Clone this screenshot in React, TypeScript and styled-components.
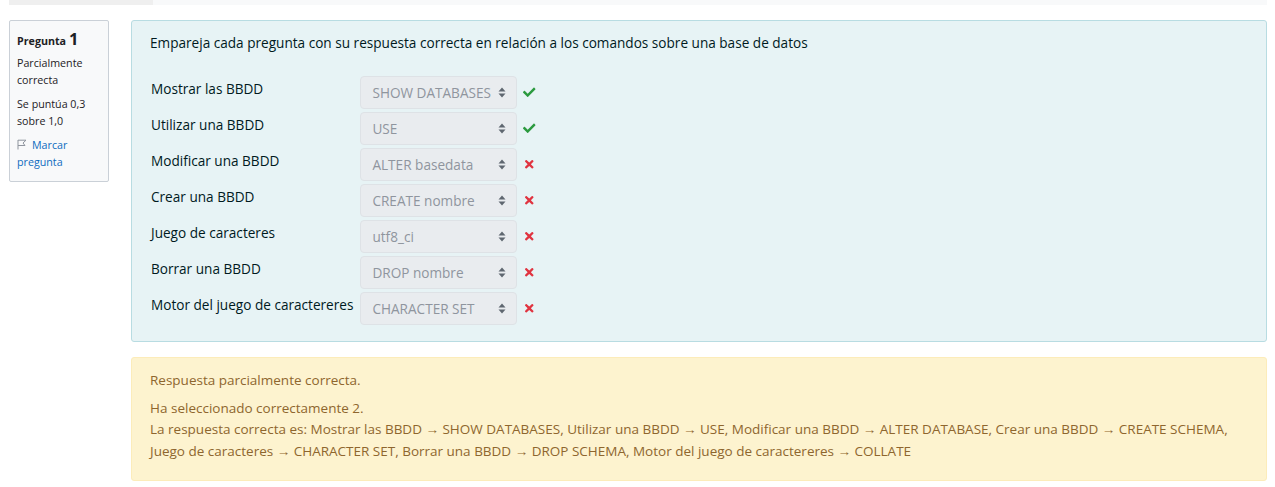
import React from "react";
import styled, { createGlobalStyle } from "styled-components";
import { FaCheck, FaTimes } from "react-icons/fa";

const Global = createGlobalStyle`
  html, body { margin: 0; padding: 0; background: #fff; }
  body { font-family: "Open Sans", "Noto Sans", sans-serif; color: #1d2125; }
`;

const Page = styled.div`
  width: 1275px;
  height: 487px;
  overflow: hidden;
  box-sizing: border-box;
`;

const TopStrip = styled.div`
  display: flex;
  height: 5px;
  margin: 0 8px 0 9px;
`;

const StripPart = styled.div<{ $w?: number; $bg: string }>`
  background: ${(p) => p.$bg};
  ${(p) => (p.$w ? `width: ${p.$w}px;` : "flex: 1;")}
`;

const Question = styled.div`
  display: flex;
  gap: 22px;
  margin: 15px 8px 0 9px;
`;

const Info = styled.div`
  width: 100px;
  flex: none;
  box-sizing: border-box;
  align-self: flex-start;
  background: #f8f9fa;
  border: 1px solid #cad0d7;
  border-radius: 2px;
  padding: 8px 7px 10px 7px;
  font-size: 10.7px;
  line-height: 17px;
  color: #1d2125;
`;

const QNo = styled.h3`
  margin: 0 0 4px 0;
  font-size: 10.7px;
  font-weight: 700;
  line-height: 20px;
  span { font-size: 16.5px; margin-left: 3px; }
`;

const InfoLine = styled.div`
  margin-bottom: 7px;
`;

const FlagLink = styled.div`
  color: #0f6cbf;
  svg { margin-right: 5px; vertical-align: -1px; }
`;

const Main = styled.div`
  flex: 1;
  display: flex;
  flex-direction: column;
  gap: 15px;
`;

const Formulation = styled.div`
  background: #e7f3f5;
  border: 1px solid #b8dce2;
  border-radius: 3px;
  padding: 11px 18px 16px 18px;
  color: #001a1e;
  font-size: 13.6px;
`;

const QText = styled.div`
  line-height: 22px;
  margin-bottom: 22px;
`;

const Matches = styled.div`
  display: grid;
  grid-template-columns: max-content max-content 20px;
  column-gap: 5px;
  row-gap: 3px;
  align-items: start;
`;

const Label = styled.div`
  line-height: 22px;
  padding-top: 2px;
  padding-left: 1px;
  padding-right: 2px;
  color: #001a1e;
`;

const Select = styled.div`
  width: 157px;
  height: 33px;
  box-sizing: border-box;
  background: #e9ecef;
  border: 1px solid #dee2e6;
  border-radius: 4px;
  display: flex;
  align-items: center;
  justify-content: space-between;
  padding: 0 10px 0 11px;
  color: #8f959e;
  white-space: nowrap;
`;

const Mark = styled.div<{ $ok: boolean }>`
  height: 33px;
  display: flex;
  align-items: center;
  padding-left: 1px;
  color: ${(p) => (p.$ok ? "#2b9a3f" : "#e03440")};
  font-size: 12.5px;
`;

const Feedback = styled.div`
  background: #fdf3cf;
  border: 1px solid #fcecba;
  border-radius: 3px;
  padding: 12px 18px 18px 18px;
  color: #8e662e;
  font-size: 13.5px;
  line-height: 21.5px;
  p { margin: 0; }
  p + p { margin-top: 6px; }
`;

const Arrows = () => (
  <svg width="8" height="11" viewBox="0 0 8 11">
    <path d="M4 0.5 L7.5 4.5 H0.5 Z" fill="#5f6770" />
    <path d="M4 10.5 L7.5 6.5 H0.5 Z" fill="#5f6770" />
  </svg>
);

const Flag = () => (
  <svg width="10" height="11" viewBox="0 0 10 11" fill="none" stroke="#8f959e" strokeWidth="1">
    <path d="M1 1 V10.5" />
    <path d="M1 1.2 L9 1.2 L6 4 L8 6.5 L1 6.5" />
  </svg>
);

const rows: { label: string; value: string; ok: boolean }[] = [
  { label: "Mostrar las BBDD", value: "SHOW DATABASES", ok: true },
  { label: "Utilizar una BBDD", value: "USE", ok: true },
  { label: "Modificar una BBDD", value: "ALTER basedata", ok: false },
  { label: "Crear una BBDD", value: "CREATE nombre", ok: false },
  { label: "Juego de caracteres", value: "utf8_ci", ok: false },
  { label: "Borrar una BBDD", value: "DROP nombre", ok: false },
  { label: "Motor del juego de caractereres", value: "CHARACTER SET", ok: false },
];

export default function App() {
  return (
    <Page>
      <Global />
      <TopStrip>
        <StripPart $w={144} $bg="#efefef" />
        <StripPart $bg="#f8f9fa" />
      </TopStrip>
      <Question>
        <Info>
          <QNo>
            Pregunta<span>1</span>
          </QNo>
          <InfoLine>Parcialmente correcta</InfoLine>
          <InfoLine>Se puntúa 0,3 sobre 1,0</InfoLine>
          <FlagLink>
            <Flag />
            Marcar pregunta
          </FlagLink>
        </Info>
        <Main>
          <Formulation>
            <QText>
              Empareja cada pregunta con su respuesta correcta en relación a los comandos sobre una base de datos
            </QText>
            <Matches>
              {rows.map((r) => (
                <React.Fragment key={r.label}>
                  <Label>{r.label}</Label>
                  <Select>
                    <span>{r.value}</span>
                    <Arrows />
                  </Select>
                  <Mark $ok={r.ok}>{r.ok ? <FaCheck /> : <FaTimes />}</Mark>
                </React.Fragment>
              ))}
            </Matches>
          </Formulation>
          <Feedback>
            <p>Respuesta parcialmente correcta.</p>
            <p>
              Ha seleccionado correctamente 2.
              <br />
              La respuesta correcta es: Mostrar las BBDD → SHOW DATABASES, Utilizar una BBDD → USE, Modificar una BBDD → ALTER DATABASE, Crear una BBDD → CREATE SCHEMA, Juego de caracteres → CHARACTER SET, Borrar una BBDD → DROP SCHEMA, Motor del juego de caractereres → COLLATE
            </p>
          </Feedback>
        </Main>
      </Question>
    </Page>
  );
}
